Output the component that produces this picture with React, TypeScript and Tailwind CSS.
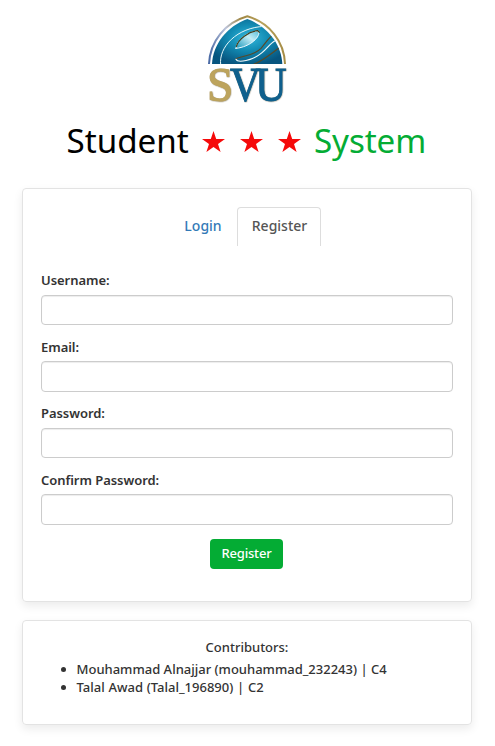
import React from "react";

function Logo() {
  return (
    <svg className="block h-[90px] w-[82px] overflow-visible" viewBox="6 6 246 270" role="img" aria-label="SVU">
      <defs>
        <linearGradient id="rim" x1="0" y1="0" x2="1" y2="0">
          <stop offset="0" stopColor="#4868a4" />
          <stop offset="0.22" stopColor="#bcc4da" />
          <stop offset="0.42" stopColor="#a08743" />
          <stop offset="0.7" stopColor="#b8a25c" />
          <stop offset="1" stopColor="#a58c45" />
        </linearGradient>
        <radialGradient id="dome" cx="0.52" cy="0.42" r="0.6">
          <stop offset="0" stopColor="#35b8dc" />
          <stop offset="0.45" stopColor="#138db5" />
          <stop offset="1" stopColor="#07557f" />
        </radialGradient>
        <linearGradient id="eye" x1="0" y1="1" x2="1" y2="0">
          <stop offset="0" stopColor="#1797bb" />
          <stop offset="0.6" stopColor="#c4edf6" />
          <stop offset="1" stopColor="#58bfd8" />
        </linearGradient>
        <clipPath id="domeClip">
          <path d="M21 156C24 96 66 43 127 21C188 43 229 96 232 156Z" />
        </clipPath>
      </defs>
      <path d="M12 156C15 88 60 32 127 13C193 32 238 88 240 156" fill="none" stroke="url(#rim)" strokeWidth="6" />
      <path d="M21 156C24 96 66 43 127 21C188 43 229 96 232 156Z" fill="url(#dome)" />
      <g clipPath="url(#domeClip)" fill="none" strokeLinecap="round">
        <path d="M47 158C40 105 96 46 178 43" stroke="#e5f7fa" strokeWidth="3" />
        <path d="M93 141C101 132 145 134 168 109C181 94 188 82 198 74" stroke="#574a29" strokeWidth="3.5" />
        <path d="M93 142C98 153 142 147 171 122C188 107 196 94 210 86" stroke="#f0f8fa" strokeWidth="3.5" />
        <path d="M146 157C177 145 197 126 222 108" stroke="#574a29" strokeWidth="4" />
        <path d="M93 109C93 84 130 57 160 57C169 72 137 105 93 109Z" fill="url(#eye)" stroke="#effaff" strokeWidth="3" />
        <path d="M94 104C99 82 131 58 158 56L163 61" stroke="#40401f" strokeWidth="3.5" />
      </g>
      <g
        className="drop-shadow-[1px_1px_0px_#99927f]"
        fontFamily="Liberation Serif"
        fontSize="143"
        strokeWidth="3"
      >
        <text x="6" y="268" textLength="79" lengthAdjust="spacingAndGlyphs" fill="#bda45d" stroke="#bda45d">S</text>
        <text x="75" y="267" textLength="92" lengthAdjust="spacingAndGlyphs" fill="#0f608d" stroke="#0f608d">V</text>
        <text x="151" y="267" textLength="94" lengthAdjust="spacingAndGlyphs" fill="#0f608d" stroke="#0f608d">U</text>
      </g>
    </svg>
  );
}

function Star() {
  return (
    <svg className="h-[21px] w-[23px]" viewBox="0 0 23 21" fill="#f50a0a">
      <path d="M11.5 0L14.2 8H23L16 13L18.6 21L11.5 16L4.4 21L7 13L0 8H8.8Z" />
    </svg>
  );
}

function Field({ label, type = "text", tall = false }: { label: string; type?: string; tall?: boolean }) {
  return (
    <label className={`block text-[13px] leading-[18px] font-semibold tracking-[-0.05px] ${tall ? "h-[66px]" : "h-[67px]"}`}>
      <span className={`block ${tall ? "h-[23px]" : "h-[24px]"}`}>{label}</span>
      <input
        type={type}
        className={`block w-full rounded-[4px] border border-[#ccc] bg-white px-3 shadow-[inset_0_1px_1px_rgba(0,0,0,0.075)] outline-none ${tall ? "h-[31px]" : "h-[30px]"}`}
      />
    </label>
  );
}

export default function App() {
  return (
    <main className="h-[746px] w-[495px] overflow-hidden bg-white px-[22px] pt-[14px] font-['Noto_Sans',sans-serif] text-[13px] leading-[18px] font-medium text-[#333]">
      <div className="ml-[185px]"><Logo /></div>
      <h1 className="mt-[13px] flex h-[48px] items-center pl-[44.5px] text-[33.2px] leading-[48px] font-normal whitespace-nowrap text-black">
        <span className="w-[135.5px]">Student</span>
        <span className="flex w-[112px] gap-[15px] pt-[1px]"><Star /><Star /><Star /></span>
        <span className="tracking-[-0.1px] text-[#04ac34]">System</span>
      </h1>
      <section className="mt-[23px] h-[414px] w-[450px] rounded-[4px] border border-[#e3e3e3] px-[18px] pt-[18px] shadow-[0_4px_10px_rgba(0,0,0,0.08)]">
        <nav className="flex h-[39px] pl-[128px] text-[14px] leading-[20px]">
          <button className="h-[39px] w-[68px] pb-px text-[#337ab7]">Login</button>
          <button className="h-[39px] w-[84px] rounded-t-[4px] border border-b-0 border-[#ddd] pb-[2px] pl-px text-[#555]">Register</button>
        </nav>
        <form className="mt-[25px]">
          <Field label="Username:" />
          <Field label="Email:" tall />
          <Field label="Password:" type="password" />
          <Field label="Confirm Password:" type="password" tall />
          <button type="button" className="mt-[2px] ml-[169px] block h-[30px] w-[73px] rounded-[4px] bg-[#04ac34] pb-[2px] text-[13px] tracking-[-0.2px] text-white">Register</button>
        </form>
      </section>
      <section className="mt-[18px] h-[105px] w-[450px] rounded-[4px] border border-[#e3e3e3] px-[18px] pt-[17px] shadow-[0_4px_10px_rgba(0,0,0,0.08)]">
        <p className="text-center">Contributors:</p>
        <ul className="mt-[4px] list-disc pl-[35.5px]">
          <li>Mouhammad Alnajjar (mouhammad_232243) | C4</li>
          <li className="[word-spacing:0.4px]">Talal Awad (Talal_196890) | C2</li>
        </ul>
      </section>
    </main>
  );
}
